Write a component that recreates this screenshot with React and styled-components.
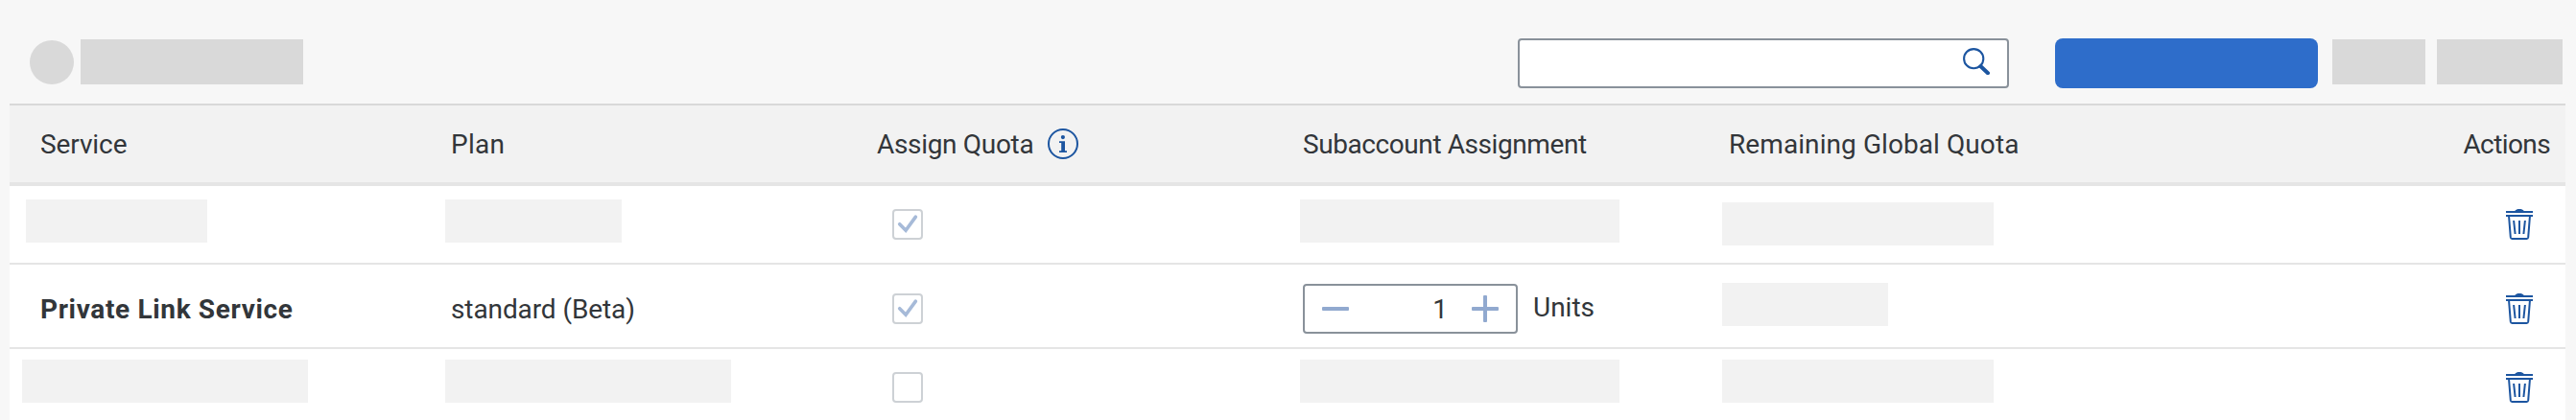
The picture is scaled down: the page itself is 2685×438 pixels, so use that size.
import React from "react";
import styled, { createGlobalStyle, css } from "styled-components";

const Global = createGlobalStyle`
  *, *::before, *::after { box-sizing: border-box; }
  body {
    margin: 0;
    background: #f7f7f7;
    color: #32363a;
    font: 400 28px/32px Roboto, "Liberation Sans", sans-serif;
  }
  svg { display: block; flex: none; }
`;

const Page = styled.div`
  height: 438px;
  overflow: hidden;
  background: #f7f7f7;
`;

/* Toolbar */
const Toolbar = styled.header`
  display: flex;
  align-items: flex-start;
  height: 108px;
  padding: 40px 14px 0 31px;
`;

const Avatar = styled.div`
  width: 46px;
  height: 46px;
  margin: 2px 7px 0 0;
  border-radius: 50%;
  background: #d9d9d9;
`;

const ToolbarBlock = styled.div`
  width: ${(p) => p.$width}px;
  height: 47px;
  margin-top: 1px;
  background: #d9d9d9;
`;

const Search = styled.div`
  display: flex;
  justify-content: flex-end;
  width: 512px;
  height: 52px;
  margin-left: auto;
  padding: 8px 18px 0 0;
  border: 2px solid #89919a;
  border-radius: 4px;
  background: #fff;
`;

const PrimaryButton = styled.button`
  width: 274px;
  height: 52px;
  margin: 0 15px 0 48px;
  border: 0;
  border-radius: 8px;
  background: #2e6dca;
`;

const Secondary = styled.div`
  display: flex;
  gap: 12px;
`;

/* Table */
const Table = styled.main`
  width: 2664px;
  margin-left: 10px;
  background: #fff;
`;

const Row = styled.div`
  display: grid;
  grid-template-columns: repeat(6, 444px);
  height: ${(p) => p.$height}px;
  padding-top: ${(p) => p.$top || 0}px;
  border-bottom: 2px solid #e5e5e5;

  ${(p) =>
    p.$header &&
    css`
      border-top: 2px solid #d9d9d9;
      border-bottom: 4px solid #e5e5e5;
      background: #f2f2f2;
    `}
`;

const Cell = styled.div`
  display: flex;
  align-items: center;
  height: 80px;
  padding: 0 16px;

  &:first-child { padding-left: 32px; }
  &:last-child { justify-content: flex-end; }
`;

const CheckCell = styled(Cell)`
  padding-left: 32px;
`;

const ActionCell = styled(Cell)`
  &:last-child { padding-right: 34px; }
`;

const Label = styled.span`
  padding-top: 1px;
  white-space: nowrap;
  font-weight: ${(p) => (p.$bold ? 700 : 400)};
  letter-spacing: ${(p) => p.$track || 0}px;
`;

const Units = styled(Label)`
  margin: -3px 0 0 16px;
`;

const Placeholder = styled.div`
  align-self: flex-start;
  width: ${(p) => p.$width}px;
  height: 45px;
  margin: ${(p) => p.$top}px 0 0 ${(p) => p.$shift}px;
  background: #f2f2f2;
`;

const Box = styled.div`
  display: flex;
  align-items: center;
  justify-content: center;
  width: 32px;
  height: 32px;
  border: 2px solid #cdd1d5;
  border-radius: 4px;
  background: #fff;
`;

const Stepper = styled.div`
  display: flex;
  align-items: center;
  width: 224px;
  height: 52px;
  padding: 0 18px;
  border: 2px solid #89919a;
  border-radius: 4px;
  background: #fff;
`;

const StepperValue = styled.span`
  flex: 1;
  padding: 1px 25px 0 0;
  text-align: right;
`;

const InfoSvg = styled.svg`
  margin-left: 15px;
`;

const SearchIcon = () => (
  <svg width="28" height="28" viewBox="0 0 28 28" fill="none" stroke="#1c55a0">
    <circle cx="11.2" cy="11.2" r="10.1" strokeWidth="2.1" />
    <path d="M18.6 19.2 26 26.2" strokeWidth="4" strokeLinecap="round" />
  </svg>
);

const InfoIcon = () => (
  <InfoSvg width="32" height="32" viewBox="0 0 32 32" fill="none">
    <circle cx="16" cy="16" r="15" stroke="#1c55a0" strokeWidth="2" />
    <circle cx="15.9" cy="9.1" r="2.1" fill="#1c55a0" />
    <path d="M12 13.2H18V23.2H20V25H12V23.2H14.2V15H12Z" fill="#1c55a0" />
  </InfoSvg>
);

const CheckIcon = () => (
  <svg width="28" height="28" viewBox="0 0 28 28" fill="none">
    <path d="M5.7 13.7 12.1 20.2 22.4 6.1" stroke="#a6bad8" strokeWidth="3.6" strokeLinecap="round" />
  </svg>
);

const MinusIcon = () => (
  <svg width="28" height="28" viewBox="0 0 28 28" fill="#91a9cf">
    <rect y="12" width="28" height="4" rx="1" />
  </svg>
);

const PlusIcon = () => (
  <svg width="28" height="28" viewBox="0 0 28 28" fill="#91a9cf">
    <rect y="12" width="28" height="4" rx="1" />
    <rect x="12" width="4" height="28" rx="1" />
  </svg>
);

const TrashIcon = () => (
  <svg width="28" height="32" viewBox="0 0 28 32" fill="none" stroke="#1c55a0" strokeWidth="2">
    <path d="M9 2.3C10 .5 12 0 14 0s4 .5 5 2.3Z" fill="#1c55a0" stroke="none" />
    <path d="M0 3H28M0 7H28" />
    <path d="M3.1 8 4.8 29.4Q5 31 6.4 31H21.6Q23 31 23.2 29.4L24.9 8" />
    <path d="M8.1 12 9.6 26M14 12V26M19.9 12 18.4 26" />
  </svg>
);

const Checkbox = ({ checked }) => <Box>{checked && <CheckIcon />}</Box>;

const DeleteAction = () => (
  <ActionCell>
    <TrashIcon />
  </ActionCell>
);

export default function App() {
  return (
    <Page>
      <Global />
      <Toolbar>
        <Avatar />
        <ToolbarBlock $width={232} />
        <Search>
          <SearchIcon />
        </Search>
        <PrimaryButton />
        <Secondary>
          <ToolbarBlock $width={97} />
          <ToolbarBlock $width={131} />
        </Secondary>
      </Toolbar>

      <Table>
        <Row $header $height={86}>
          <Cell><Label $track={-0.1}>Service</Label></Cell>
          <Cell><Label $track={0.3}>Plan</Label></Cell>
          <Cell>
            <Label $track={-0.32}>Assign Quota</Label>
            <InfoIcon />
          </Cell>
          <Cell><Label $track={-0.42}>Subaccount Assignment</Label></Cell>
          <Cell><Label $track={0.08}>Remaining Global Quota</Label></Cell>
          <Cell><Label $track={-0.6}>Actions</Label></Cell>
        </Row>

        <Row $height={82}>
          <Cell><Placeholder $width={189} $top={14} $shift={-15} /></Cell>
          <Cell><Placeholder $width={184} $top={14} $shift={-6} /></Cell>
          <CheckCell><Checkbox checked /></CheckCell>
          <Cell><Placeholder $width={333} $top={14} $shift={-3} /></Cell>
          <Cell><Placeholder $width={283} $top={17} $shift={-7} /></Cell>
          <DeleteAction />
        </Row>

        <Row $height={88} $top={6}>
          <Cell><Label $bold $track={0.65}>Private Link Service</Label></Cell>
          <Cell><Label $track={-0.1}>standard (Beta)</Label></Cell>
          <CheckCell><Checkbox checked /></CheckCell>
          <Cell>
            <Stepper>
              <MinusIcon />
              <StepperValue>1</StepperValue>
              <PlusIcon />
            </Stepper>
            <Units>Units</Units>
          </Cell>
          <Cell><Placeholder $width={173} $top={13} $shift={-7} /></Cell>
          <DeleteAction />
        </Row>

        <Row $height={82}>
          <Cell><Placeholder $width={298} $top={11} $shift={-19} /></Cell>
          <Cell><Placeholder $width={298} $top={11} $shift={-6} /></Cell>
          <CheckCell><Checkbox /></CheckCell>
          <Cell><Placeholder $width={333} $top={11} $shift={-3} /></Cell>
          <Cell><Placeholder $width={283} $top={11} $shift={-7} /></Cell>
          <DeleteAction />
        </Row>
      </Table>
    </Page>
  );
}
